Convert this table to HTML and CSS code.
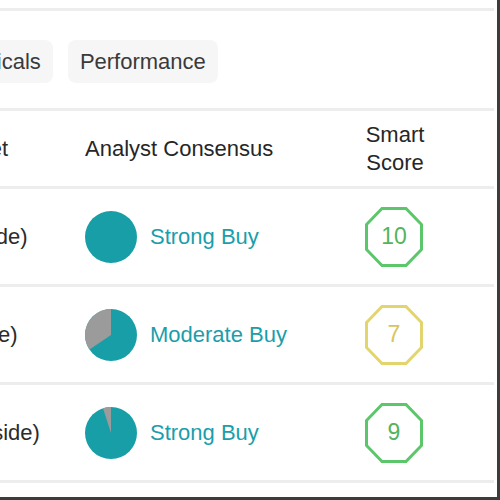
FILE: index.html
```html
<!DOCTYPE html>
<html>
<head>
<meta charset="utf-8">
<link rel="stylesheet" href="styles.css">
</head>
<body>
<div class="frame">
  <div class="panel">
    <div class="topbar"></div>
    <div class="tabs">
      <div class="tab">Analysts</div>
      <div class="tab">Technicals</div>
      <div class="tab">Performance</div>
    </div>
    <div class="row head">
      <div class="cell first">12-Month Price Target</div>
      <div class="cell">Analyst Consensus</div>
      <div class="cell score-col"><div class="score-head">Smart<br>Score</div></div>
    </div>
    <div class="row">
      <div class="cell first">$112.80 (9.15% Upside)</div>
      <div class="cell consensus">
        <svg class="pie" width="52" height="52" viewBox="0 0 52 52"><circle cx="26" cy="26" r="26" fill="#179ea6"/></svg>
        <span class="rating">Strong Buy</span>
      </div>
      <div class="cell score-col">
        <div class="score green">
          <svg width="58" height="60" viewBox="0 0 58 60"><polygon points="17,1.5 41,1.5 56.5,17.5 56.5,42.5 41,58.5 17,58.5 1.5,42.5 1.5,17.5" fill="none" stroke="currentColor" stroke-width="3"/></svg>
          <span class="num">10</span>
        </div>
      </div>
    </div>
    <div class="row">
      <div class="cell first">$95.20 (+8.5% Upside)</div>
      <div class="cell consensus">
        <svg class="pie" width="52" height="52" viewBox="0 0 52 52"><circle cx="26" cy="26" r="26" fill="#179ea6"/><path d="M26 26 L4.44 40.54 A26 26 0 0 1 26 0 Z" fill="#9b9b9b"/></svg>
        <span class="rating">Moderate Buy</span>
      </div>
      <div class="cell score-col">
        <div class="score yellow">
          <svg width="58" height="60" viewBox="0 0 58 60"><polygon points="17,1.5 41,1.5 56.5,17.5 56.5,42.5 41,58.5 17,58.5 1.5,42.5 1.5,17.5" fill="none" stroke="currentColor" stroke-width="3"/></svg>
          <span class="num">7</span>
        </div>
      </div>
    </div>
    <div class="row">
      <div class="cell first">$112.80 (10.15% Upside)</div>
      <div class="cell consensus">
        <svg class="pie" width="52" height="52" viewBox="0 0 52 52"><circle cx="26" cy="26" r="26" fill="#179ea6"/><path d="M26 26 L17.97 1.27 A26 26 0 0 1 26 0 Z" fill="#9b9b9b"/></svg>
        <span class="rating">Strong Buy</span>
      </div>
      <div class="cell score-col">
        <div class="score green">
          <svg width="58" height="60" viewBox="0 0 58 60"><polygon points="17,1.5 41,1.5 56.5,17.5 56.5,42.5 41,58.5 17,58.5 1.5,42.5 1.5,17.5" fill="none" stroke="currentColor" stroke-width="3"/></svg>
          <span class="num">9</span>
        </div>
      </div>
    </div>
  </div>
</div>
</body>
</html>
```
FILE: styles.css
```css
html, body {
  margin: 0;
  padding: 0;
  background: #ffffff;
  overflow: hidden;
}
body {
  font-family: "Liberation Sans", Arial, sans-serif;
  font-size: 22px;
  color: #2b2b2b;
}
.frame {
  width: 497px;
  height: 497px;
  border-right: 3px solid #3c3c3c;
  border-bottom: 3px solid #3c3c3c;
  overflow: hidden;
  background: #ffffff;
}
.panel {
  margin-left: -208px;
  width: 702px;
}
.topbar {
  height: 8px;
  border-bottom: 3px solid #ededed;
}
.tabs {
  display: flex;
  gap: 15px;
  padding: 29px 0 25px 12px;
  border-bottom: 3px solid #ededed;
}
.tab {
  height: 43px;
  padding: 0 12px;
  display: flex;
  align-items: center;
  background: #f6f6f6;
  border-radius: 8px;
  color: #3a3a3a;
  white-space: nowrap;
}
.row {
  display: grid;
  grid-template-columns: 293px 280px 1fr;
  height: 95px;
  border-bottom: 3px solid #ededed;
  align-items: center;
}
.row.head {
  height: 75px;
  color: #262626;
}
.cell {
  display: flex;
  align-items: center;
  white-space: nowrap;
}
.first {
  color: #2b2b2b;
}
.consensus {
  gap: 13px;
}
.pie {
  display: block;
  flex: none;
}
.rating {
  color: #1a9eab;
}
.score-head {
  width: 60px;
  text-align: center;
  line-height: 28px;
}
.score {
  position: relative;
  width: 58px;
  height: 60px;
}
.score svg {
  display: block;
}
.score .num {
  position: absolute;
  inset: 0;
  display: flex;
  align-items: center;
  justify-content: center;
  font-size: 23px;
}
.green {
  color: #5cc66a;
}
.green .num {
  color: #52b45c;
}
.yellow {
  color: #e3d56e;
}
.yellow .num {
  color: #d6c660;
}
```
